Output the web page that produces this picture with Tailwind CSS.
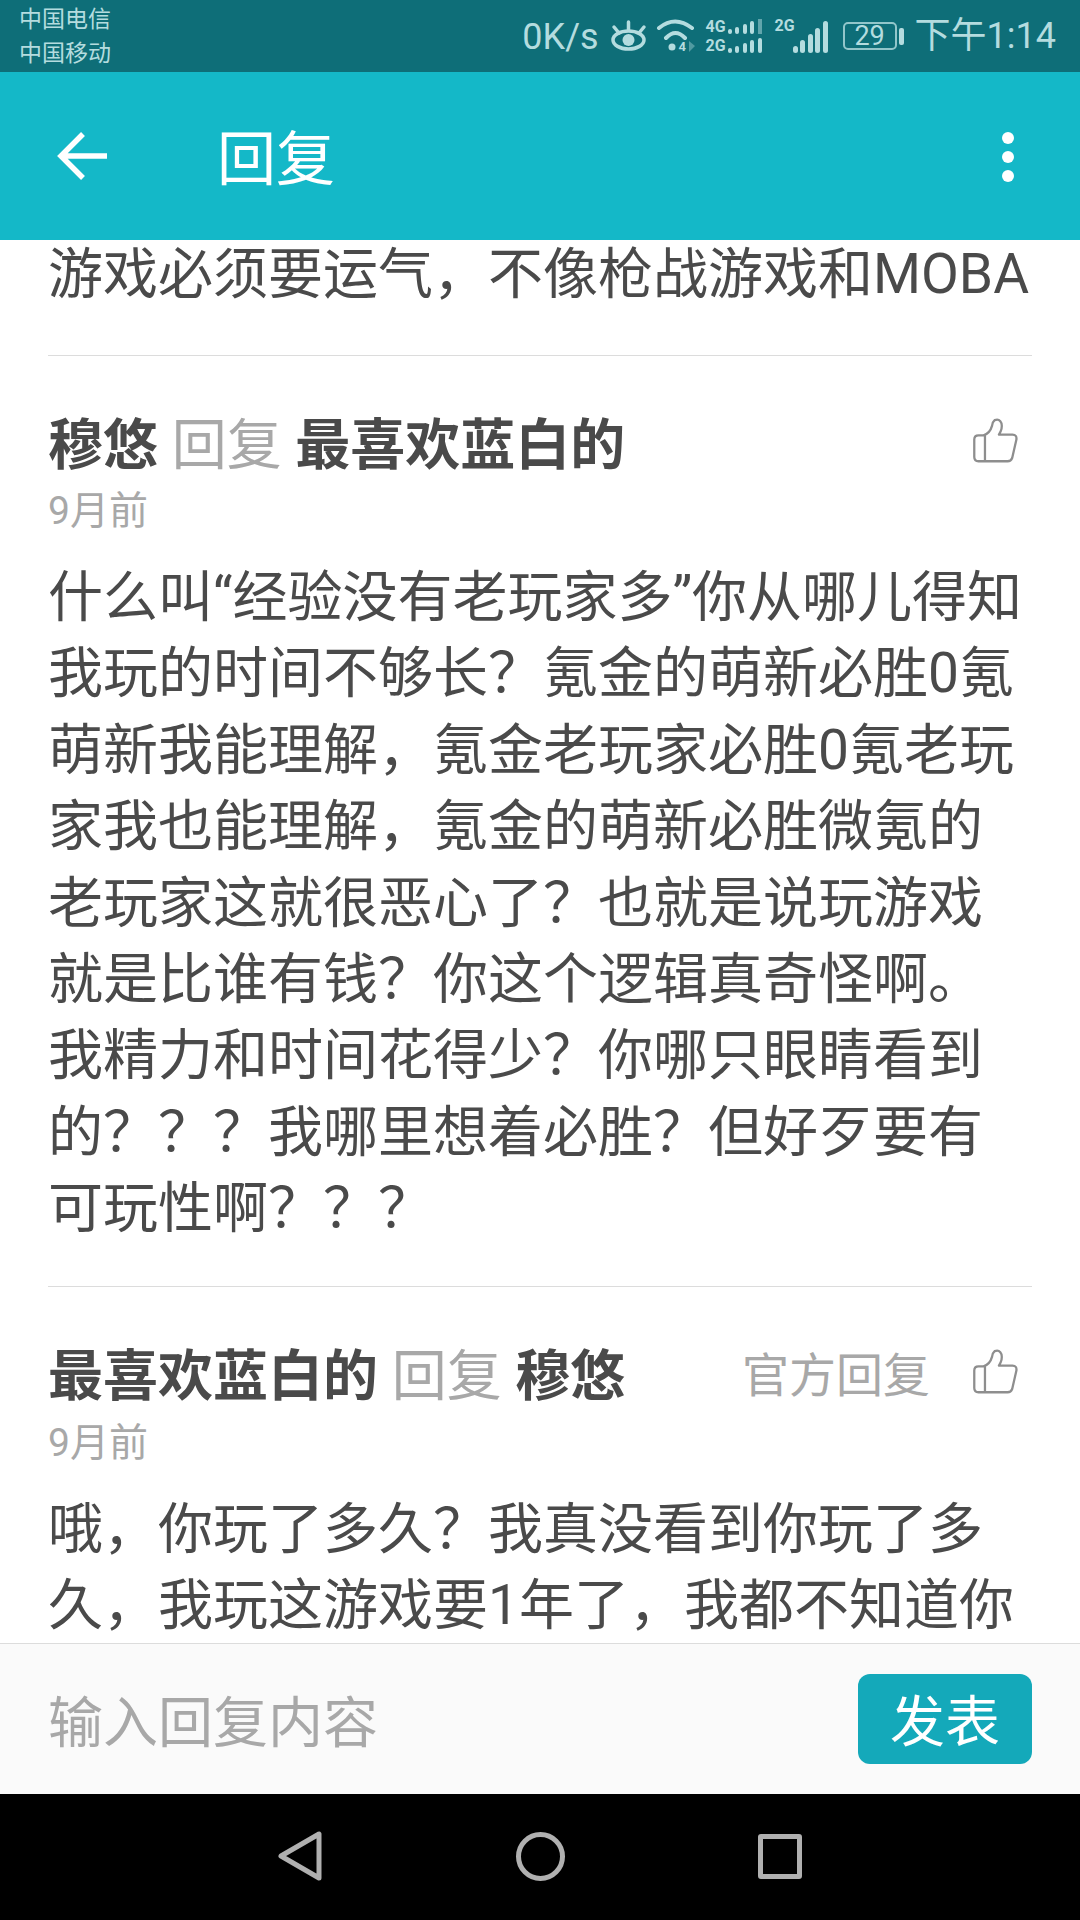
<!DOCTYPE html>
<html lang="zh-CN">
<head>
    <meta charset="UTF-8">
    <meta name="viewport" content="width=device-width, initial-scale=1.0">
    <title>回复</title>
    <script src="https://cdn.jsdelivr.net/npm/@tailwindcss/browser@4"></script>
</head>
<body class="bg-white font-['Roboto','Noto_Sans_CJK_SC',sans-serif]">
    <div class="w-[1080px] h-[1920px] flex flex-col overflow-hidden">
        <!-- status bar -->
        <div class="h-[72px] bg-[#0e6e78] text-[#b4dcdf] flex items-center justify-between pl-[19px] pr-6 shrink-0">
            <div class="text-[23px] leading-[34px] pt-[2px]">
                <div>中国电信</div>
                <div>中国移动</div>
            </div>
            <div class="flex items-center">
                <span class="text-[36px] leading-none mr-[11px] pt-[2px]">0K/s</span>
                <svg class="w-[37px] h-[36px] mr-[9px]" viewBox="0 0 37 36" fill="none" stroke="#b4dcdf" stroke-width="3.500" stroke-linecap="round">
                    <path d="M4 9l5 6M34 9l-5 6M18.500 4v8"/>
                    <ellipse cx="18.500" cy="22" rx="15.500" ry="9"/>
                    <circle cx="18.500" cy="22" r="6" fill="#b4dcdf" stroke="none"/>
                </svg>
                <div class="relative w-[40px] h-[36px] mr-[10px]">
                    <svg class="w-[40px] h-[36px]" viewBox="0 0 40 36" fill="none" stroke="#b4dcdf" stroke-width="4" stroke-linecap="round">
                        <path d="M3 10Q19 -3 36 10M10 20Q19.500 10 29 20"/>
                        <circle cx="16" cy="29" r="3.500" fill="#b4dcdf" stroke="none"/>
                        <path d="M33 23v11l6 -6z" fill="#b4dcdf" stroke="none" opacity="0.4"/>
                    </svg>
                    <span class="absolute left-[23px] top-[22px] text-[13px] leading-[14px] font-bold">4</span>
                </div>
                <div class="w-[58px] h-[34px] mr-[11px] flex flex-col gap-[4px]">
                    <div class="flex items-end h-[15px]">
                        <span class="text-[16px] leading-[15px] font-bold w-[21px]">4G</span>
                        <div class="flex items-end gap-[3.500px] ml-[1px]">
                            <i class="block w-[4px] h-[5px] rounded-full bg-[#b4dcdf]"></i>
                            <i class="block w-[4px] h-[7px] rounded-full bg-[#b4dcdf]"></i>
                            <i class="block w-[4px] h-[10px] rounded-full bg-[#b4dcdf]"></i>
                            <i class="block w-[4px] h-[13px] rounded-full bg-[#b4dcdf]"></i>
                            <i class="block w-[4px] h-[15px] bg-[#b4dcdf]/50"></i>
                        </div>
                    </div>
                    <div class="flex items-end h-[15px]">
                        <span class="text-[16px] leading-[15px] font-bold w-[21px]">2G</span>
                        <div class="flex items-end gap-[3.500px] ml-[1px]">
                            <i class="block w-[4px] h-[5px] rounded-full bg-[#b4dcdf]"></i>
                            <i class="block w-[4px] h-[7px] rounded-full bg-[#b4dcdf]"></i>
                            <i class="block w-[4px] h-[10px] rounded-full bg-[#b4dcdf]"></i>
                            <i class="block w-[4px] h-[13px] rounded-full bg-[#b4dcdf]"></i>
                            <i class="block w-[4px] h-[15px] rounded-full bg-[#b4dcdf]"></i>
                        </div>
                    </div>
                </div>
                <div class="relative w-[53px] h-[34px] mr-[15px] flex items-end justify-end gap-[2.500px]">
                    <span class="absolute left-0 top-0 text-[16px] leading-[14px] font-bold">2G</span>
                    <i class="block w-[5px] h-[7px] rounded-full bg-[#b4dcdf]"></i>
                    <i class="block w-[5px] h-[13px] rounded-full bg-[#b4dcdf]"></i>
                    <i class="block w-[5px] h-[19px] rounded-full bg-[#b4dcdf]"></i>
                    <i class="block w-[5px] h-[25px] rounded-full bg-[#b4dcdf]"></i>
                    <i class="block w-[5px] h-[32px] rounded-full bg-[#b4dcdf]"></i>
                </div>
                <div class="w-[54px] h-[28px] border-[2px] border-[#b4dcdf]/80 rounded-[5px] flex items-center justify-center text-[27px] leading-none">29</div>
                <i class="block w-[5px] h-[17px] bg-[#b4dcdf] rounded-[2px] ml-[2px] mr-[11px]"></i>
                <span class="text-[36px] leading-none">下午1:14</span>
            </div>
        </div>

        <!-- header -->
        <div class="h-[168px] bg-[#14b8c8] flex items-center relative shrink-0 text-white">
            <svg class="ml-[57px] w-[50px] h-[48px]" viewBox="0 0 50 48" fill="none" stroke="#ffffff" stroke-width="5.500">
                <path d="M26 2L4 24l22 22M4 24h46"/>
            </svg>
            <span class="ml-[110px] text-[59px] leading-none pt-[6px]">回复</span>
            <div class="absolute left-[1002px] top-[60px] flex flex-col gap-[7px]">
                <i class="block w-[12px] h-[12px] rounded-full bg-white"></i>
                <i class="block w-[12px] h-[12px] rounded-full bg-white"></i>
                <i class="block w-[12px] h-[12px] rounded-full bg-white"></i>
            </div>
        </div>

        <!-- reply list -->
        <div class="flex-1 overflow-hidden text-[#4a4a4a]">
            <div class="mx-12 h-[116px] border-b border-[#dcdcdc] text-[55px] leading-[68px] whitespace-nowrap">游戏必须要运气，不像枪战游戏和MOBA</div>

            <div class="mx-12 pt-[49px] pb-[39px] border-b border-[#dcdcdc]">
                <div class="flex items-center justify-between h-[76px]">
                    <div class="text-[55px] leading-none whitespace-nowrap pt-[4px]">
                        <span class="font-bold">穆悠</span>
                        <span class="text-[#a8a8a8]">回复</span>
                        <span class="font-bold">最喜欢蓝白的</span>
                    </div>
                    <svg class="w-[47px] h-[47px] mr-[13px] mb-[6px]" viewBox="95 50 145 142" fill="none" stroke="#8e8e8e" stroke-width="7" stroke-linejoin="round">
                        <path d="M135 105V185H205Q215 185 219 175L232 118Q234 103 220 103H178Q190 85 186 68Q180 52 165 58Q157 65 157 75Q150 100 130 105H115Q102 105 102 118V172Q102 185 115 185H135"/>
                    </svg>
                </div>
                <div class="mt-2 text-[39px] leading-[44px] text-[#a8a8a8]">9月前</div>
                <div class="mt-[26px] text-[55px] leading-[76.400px] whitespace-nowrap">
                    什么叫“经验没有老玩家多”你从哪儿得知<br>
                    我玩的时间不够长？氪金的萌新必胜0氪<br>
                    萌新我能理解，氪金老玩家必胜0氪老玩<br>
                    家我也能理解，氪金的萌新必胜微氪的<br>
                    老玩家这就很恶心了？也就是说玩游戏<br>
                    就是比谁有钱？你这个逻辑真奇怪啊。<br>
                    我精力和时间花得少？你哪只眼睛看到<br>
                    的？？？我哪里想着必胜？但好歹要有<br>
                    可玩性啊？？？
                </div>
            </div>

            <div class="mx-12 pt-[50px]">
                <div class="flex items-center justify-between h-[76px]">
                    <div class="text-[55px] leading-none whitespace-nowrap pt-[4px]">
                        <span class="font-bold">最喜欢蓝白的</span>
                        <span class="text-[#a8a8a8]">回复</span>
                        <span class="font-bold">穆悠</span>
                    </div>
                    <div class="flex items-center">
                        <span class="text-[47px] leading-none text-[#a8a8a8] mr-[42px] pt-[2px]">官方回复</span>
                        <svg class="w-[47px] h-[47px] mr-[13px] mb-[6px]" viewBox="95 50 145 142" fill="none" stroke="#8e8e8e" stroke-width="7" stroke-linejoin="round">
                            <path d="M135 105V185H205Q215 185 219 175L232 118Q234 103 220 103H178Q190 85 186 68Q180 52 165 58Q157 65 157 75Q150 100 130 105H115Q102 105 102 118V172Q102 185 115 185H135"/>
                        </svg>
                    </div>
                </div>
                <div class="mt-2 text-[39px] leading-[44px] text-[#a8a8a8]">9月前</div>
                <div class="mt-[26px] text-[55px] leading-[76.400px] whitespace-nowrap">
                    哦，你玩了多久？我真没看到你玩了多<br>
                    久，我玩这游戏要1年了，我都不知道你
                </div>
            </div>
        </div>

        <!-- reply input -->
        <div class="h-[151px] shrink-0 bg-[#fafafa] border-t border-[#dcdcdc] flex items-center justify-between pl-12 pr-12">
            <span class="text-[55px] leading-none text-[#a8a8a8] pt-[8px]">输入回复内容</span>
            <button class="w-[174px] h-[90px] bg-[#14a9ba] rounded-[12px] text-white text-[55px] leading-none pt-[6px]">发表</button>
        </div>

        <!-- nav bar -->
        <div class="h-[126px] bg-black shrink-0 flex items-center relative">
            <svg class="absolute left-[277px] top-[36px] w-[46px] h-[52px]" viewBox="0 0 46 52" fill="none" stroke="#b0b0b0" stroke-width="5" stroke-linejoin="round">
                <path d="M42 4V48L4 26Z"/>
            </svg>
            <div class="absolute left-[516px] top-[38px] w-[49px] h-[49px] rounded-full border-[5px] border-[#b0b0b0]"></div>
            <div class="absolute left-[758px] top-[40px] w-[44px] h-[45px] rounded-[3px] border-[5px] border-[#b0b0b0]"></div>
        </div>
    </div>
</body>
</html>
